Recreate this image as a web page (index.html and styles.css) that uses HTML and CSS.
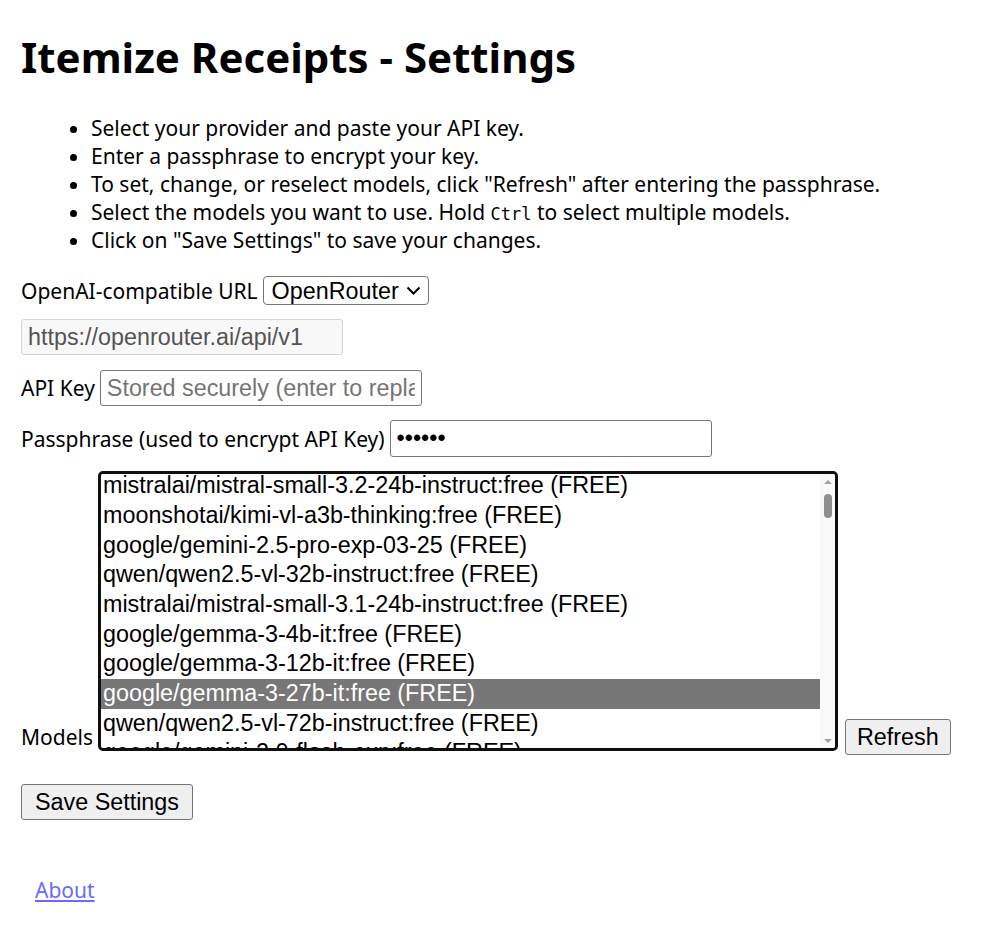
FILE: index.html
```html
<!DOCTYPE html>
<html lang="en">
<head>
    <meta charset="UTF-8">
    <meta name="viewport" content="width=device-width, initial-scale=1.0">
    <title>Itemize Receipts - Settings</title>
    <link rel="stylesheet" href="styles.css">
</head>
<body>
    <h1>Itemize Receipts - Settings</h1>
    <ul class="help">
        <li>Select your provider and paste your API key.</li>
        <li>Enter a passphrase to encrypt your key.</li>
        <li>To set, change, or reselect models, click "Refresh" after entering the passphrase.</li>
        <li>Select the models you want to use. Hold <code>Ctrl</code> to select multiple models.</li>
        <li>Click on "Save Settings" to save your changes.</li>
    </ul>

    <form class="settings" onsubmit="return false">
        <div class="row">
            <label for="provider">OpenAI-compatible URL</label>
            <span class="select-wrap">
                <select id="provider" class="provider">
                    <option selected>OpenRouter</option>
                    <option>OpenAI</option>
                    <option>Custom</option>
                </select>
                <svg class="chevron" width="15" height="9" viewBox="0 0 15 9">
                    <polyline points="1.5,1.5 7.5,7.5 13.5,1.5" fill="none" stroke="#000" stroke-width="2" />
                </svg>
            </span>
        </div>
        <div class="row">
            <input type="text" id="base-url" class="url" value="https://openrouter.ai/api/v1" disabled>
        </div>
        <div class="row api-row">
            <label for="api-key">API Key</label>
            <input type="password" id="api-key" class="key" placeholder="Stored securely (enter to replace)">
        </div>
        <div class="row">
            <label for="passphrase">Passphrase (used to encrypt API Key)</label>
            <input type="password" id="passphrase" class="key pass" value="secret">
        </div>
        <div class="row models-row">
            <label for="models">Models</label>
            <div class="listbox">
                <select id="models" class="models" multiple>
                    <option>deepseek/deepseek-r1-0528:free (FREE)</option>
                    <option>mistralai/devstral-small:free (FREE)</option>
                    <option>mistralai/mistral-small-3.2-24b-instruct:free (FREE)</option>
                    <option>moonshotai/kimi-vl-a3b-thinking:free (FREE)</option>
                    <option>google/gemini-2.5-pro-exp-03-25 (FREE)</option>
                    <option>qwen/qwen2.5-vl-32b-instruct:free (FREE)</option>
                    <option>mistralai/mistral-small-3.1-24b-instruct:free (FREE)</option>
                    <option>google/gemma-3-4b-it:free (FREE)</option>
                    <option>google/gemma-3-12b-it:free (FREE)</option>
                    <option selected>google/gemma-3-27b-it:free (FREE)</option>
                    <option>qwen/qwen2.5-vl-72b-instruct:free (FREE)</option>
                    <option>google/gemini-2.0-flash-exp:free (FREE)</option>
                    <option>meta-llama/llama-3.2-11b-vision-instruct:free (FREE)</option>
                    <option>google/gemma-3n-e4b-it:free (FREE)</option>
                    <option>qwen/qwen2.5-vl-7b-instruct:free (FREE)</option>
                    <option>openai/gpt-4.1</option>
                    <option>openai/gpt-4.1-mini</option>
                    <option>openai/gpt-4.1-nano</option>
                    <option>openai/gpt-4o</option>
                    <option>openai/gpt-4o-mini</option>
                    <option>openai/gpt-4o-2024-11-20</option>
                    <option>openai/gpt-4o-2024-08-06</option>
                    <option>openai/gpt-4o-2024-05-13</option>
                    <option>openai/chatgpt-4o-latest</option>
                    <option>openai/gpt-4-turbo</option>
                    <option>openai/o1</option>
                    <option>openai/o1-pro</option>
                    <option>openai/o3</option>
                    <option>openai/o3-pro</option>
                    <option>openai/o4-mini</option>
                    <option>openai/o4-mini-high</option>
                    <option>anthropic/claude-opus-4</option>
                    <option>anthropic/claude-sonnet-4</option>
                    <option>anthropic/claude-3.7-sonnet</option>
                    <option>anthropic/claude-3.7-sonnet:thinking</option>
                    <option>anthropic/claude-3.5-sonnet</option>
                    <option>anthropic/claude-3.5-haiku</option>
                    <option>anthropic/claude-3-opus</option>
                    <option>anthropic/claude-3-haiku</option>
                    <option>google/gemini-2.5-pro</option>
                    <option>google/gemini-2.5-flash</option>
                    <option>google/gemini-2.5-flash-lite-preview-06-17</option>
                    <option>google/gemini-2.0-flash-001</option>
                    <option>google/gemini-2.0-flash-lite-001</option>
                    <option>google/gemini-flash-1.5</option>
                    <option>google/gemini-flash-1.5-8b</option>
                    <option>google/gemini-pro-1.5</option>
                    <option>google/gemma-3-27b-it</option>
                    <option>google/gemma-3-12b-it</option>
                    <option>google/gemma-3-4b-it</option>
                    <option>meta-llama/llama-4-maverick</option>
                    <option>meta-llama/llama-4-scout</option>
                    <option>meta-llama/llama-3.2-90b-vision-instruct</option>
                    <option>meta-llama/llama-3.2-11b-vision-instruct</option>
                    <option>meta-llama/llama-guard-4-12b</option>
                    <option>mistralai/mistral-medium-3</option>
                    <option>mistralai/mistral-small-3.2-24b-instruct</option>
                    <option>mistralai/mistral-small-3.1-24b-instruct</option>
                    <option>mistralai/pixtral-large-2411</option>
                    <option>mistralai/pixtral-12b</option>
                    <option>qwen/qwen2.5-vl-72b-instruct</option>
                    <option>qwen/qwen2.5-vl-32b-instruct</option>
                    <option>qwen/qwen-vl-max</option>
                    <option>qwen/qwen-vl-plus</option>
                    <option>qwen/qwen-2.5-vl-7b-instruct</option>
                    <option>x-ai/grok-4</option>
                    <option>x-ai/grok-2-vision-1212</option>
                    <option>amazon/nova-pro-v1</option>
                    <option>amazon/nova-lite-v1</option>
                    <option>microsoft/phi-4-multimodal-instruct</option>
                    <option>moonshotai/kimi-vl-a3b-thinking</option>
                    <option>bytedance/ui-tars-1.5-7b</option>
                    <option>minimax/minimax-01</option>
                    <option>thudm/glm-4.1v-9b-thinking</option>
                    <option>z-ai/glm-4.5v</option>
                    <option>baidu/ernie-4.5-vl-424b-a47b</option>
                    <option>baidu/ernie-4.5-vl-28b-a3b</option>
                    <option>mistralai/mistral-medium-3.1</option>
                    <option>openai/gpt-5</option>
                    <option>openai/gpt-5-mini</option>
                    <option>openai/gpt-5-nano</option>
                    <option>openai/gpt-5-chat</option>
                    <option>anthropic/claude-opus-4.1</option>
                    <option>google/gemini-2.5-flash-lite</option>
                    <option>meta-llama/llama-3.2-90b-vision-instruct:free</option>
                    <option>opengvlab/internvl3-14b</option>
                    <option>opengvlab/internvl3-2b</option>
                    <option>01-ai/yi-vision</option>
                    <option>openrouter/auto</option>
                    <option>mistralai/devstral-medium</option>
                    <option>qwen/qwen3-vl-235b-a22b-instruct</option>
                    <option>nvidia/nemotron-nano-12b-v2-vl</option>
                    <option>cohere/command-a-vision</option>
                    <option>arcee-ai/spotlight</option>
                    <option>meta-llama/llama-3.2-3b-instruct</option>
                </select>
                <div class="scrollbar">
                    <div class="arrow up"></div>
                    <div class="track"><div class="thumb"></div></div>
                    <div class="arrow down"></div>
                </div>
            </div>
            <button type="button" class="refresh">Refresh</button>
        </div>
        <div class="row">
            <button type="submit" class="save">Save Settings</button>
        </div>
    </form>

    <p class="footer"><a href="#about">About</a></p>

    <script>
        const models = document.getElementById('models');
        models.scrollTop = 62;
    </script>
</body>
</html>
```

FILE: styles.css
```css
body {
    margin: 0;
    padding: 0 21px;
    font-family: "Noto Sans", sans-serif;
    font-size: 21px;
    line-height: 28px;
    color: #000;
    background: #fff;
}
h1 {
    margin: 27px 0 27px;
    font-size: 42px;
    line-height: 60px;
    font-weight: bold;
}
.help {
    margin: 0 0 22px;
    padding-left: 70px;
}
.help code {
    font-family: "DejaVu Sans Mono", monospace;
    font-size: 17px;
    line-height: 1;
}
.settings {
    display: flex;
    flex-direction: column;
    gap: 14px;
}
.row {
    display: flex;
    align-items: center;
    gap: 5px;
}
.api-row {
    margin-top: 1px;
}
select,
input,
button {
    font-family: "Liberation Sans", Arial, sans-serif;
    font-size: 23.33px;
    color: #000;
}

/* provider dropdown */
.select-wrap {
    position: relative;
    display: inline-flex;
}
.provider {
    appearance: none;
    height: 29px;
    box-sizing: border-box;
    padding: 0 28px 0 8px;
    border: 1px solid #767676;
    border-radius: 4px;
    background: #fff;
}
.chevron {
    position: absolute;
    right: 8px;
    top: 10px;
    pointer-events: none;
}

/* text inputs */
input.url,
input.key {
    width: 322px;
    height: 36px;
    box-sizing: border-box;
    padding: 1px 6px;
    border: 1px solid #767676;
    border-radius: 3px;
    background: #fff;
}
input.pass {
    height: 37px;
}
input.key::placeholder {
    color: #757575;
}
input.url:disabled {
    color: #545454;
    background: #f8f8f8;
    border-color: #d4d4d4;
}

/* model list */
.models-row {
    align-items: flex-end;
}
.models-row label {
    margin-bottom: 4px;
}
.listbox {
    display: flex;
    width: 740px;
    height: 280px;
    box-sizing: border-box;
    border: 3px solid #101010;
    border-radius: 5px;
    margin-bottom: 4px;
    overflow: hidden;
}
.models {
    flex: 1;
    height: 100%;
    border: none;
    padding: 0;
    margin: 0;
    outline: none;
    overflow: hidden;
}
.models option {
    padding: 0.85px 2px;
}
.models option:checked {
    background: #777 linear-gradient(#777, #777);
    color: #fff;
}
.scrollbar {
    width: 15px;
    display: flex;
    flex-direction: column;
    background: #fafafa;
}
.arrow {
    height: 15px;
    display: flex;
    align-items: center;
    justify-content: center;
}
.arrow::before {
    content: "";
    border-left: 4px solid transparent;
    border-right: 4px solid transparent;
}
.arrow.up::before {
    border-bottom: 4px solid #a3a3a3;
}
.arrow.down::before {
    border-top: 4px solid #a3a3a3;
}
.track {
    flex: 1;
}
.thumb {
    width: 8px;
    height: 24px;
    margin: 5px 0 0 3.5px;
    border-radius: 4px;
    background: #8f8f8f;
}

/* buttons */
.refresh,
.save {
    height: 36px;
    padding: 1px 13px;
    border: 1px solid #767676;
    border-radius: 3px;
    background: #efefef;
}
.refresh {
    margin-left: 2px;
    padding: 1px 11px;
}
.save {
    margin-top: 15px;
}
.footer {
    margin: 56px 0 0 14px;
}
.footer a {
    color: #6a6aff;
}
```
